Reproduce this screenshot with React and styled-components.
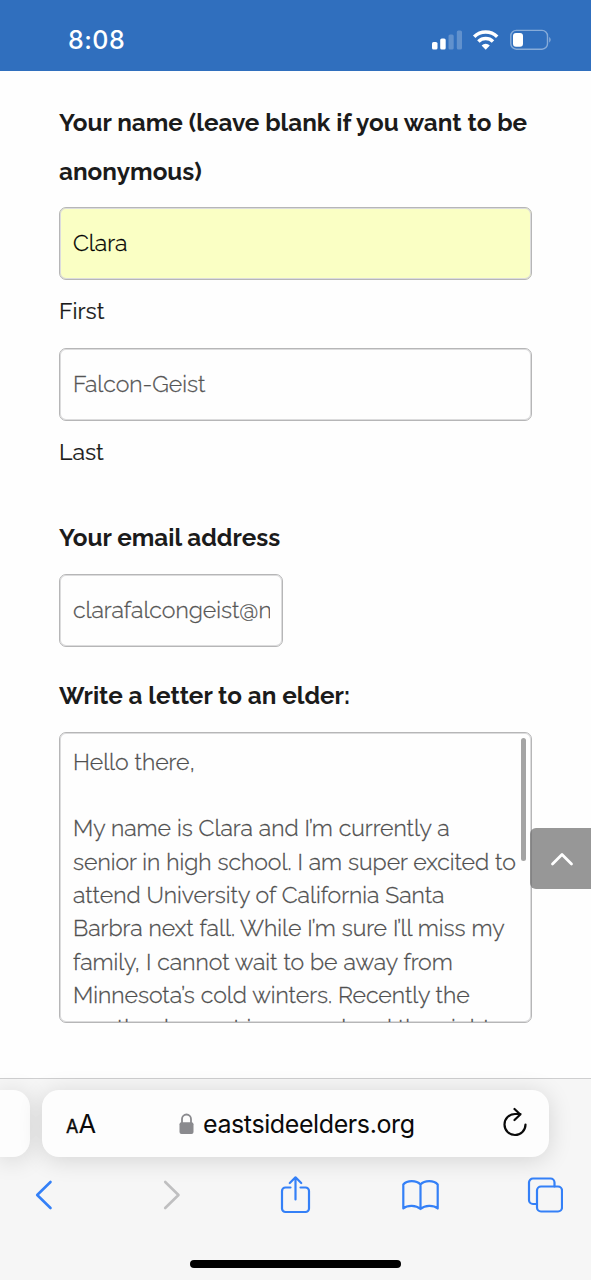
import React from "react";
import styled, { createGlobalStyle } from "styled-components";

const GlobalStyle = createGlobalStyle`
  * {
    box-sizing: border-box;
  }
  body {
    margin: 0;
    background: #fefefe;
  }
`;

const Screen = styled.div`
  position: relative;
  display: flex;
  flex-direction: column;
  width: 591px;
  height: 1280px;
  overflow: hidden;
  background: #fefefe;
  font-family: Raleway, Lato, sans-serif;
  color: #1b1b1b;
`;

const StatusBar = styled.header`
  display: flex;
  flex: none;
  align-items: center;
  justify-content: space-between;
  height: 71px;
  padding: 9px 39px 0 68px;
  background: #306fbe;
`;

const Clock = styled.div`
  font-family: Inter, sans-serif;
  font-size: 25px;
  font-weight: 500;
  letter-spacing: 0.5px;
  color: #fff;
`;

const StatusIcons = styled.svg`
  display: block;
  width: 120px;
  height: 24px;
  margin-top: 1px;
`;

const Form = styled.main`
  display: flex;
  flex: none;
  flex-direction: column;
  align-items: flex-start;
  height: 1007px;
  padding: 28px 59px 0;
  overflow: hidden;
`;

const Label = styled.label`
  margin-top: ${props => props.top || 0}px;
  font-size: 24.27px;
  font-weight: 700;
  line-height: 48.5px;
  white-space: nowrap;
`;

const Line = styled.span`
  display: block;
`;

const Box = styled.div`
  flex: none;
  border: 1px solid #b6b6b7;
  border-radius: 7px;
  box-shadow: inset 0 0 0 1px #dcdcdd;
  font-size: 23px;
  font-weight: 300;
  -webkit-text-stroke: 0.3px;
`;

const Field = styled(Box)`
  width: ${props => props.width || 473}px;
  height: 73px;
  margin-top: ${props => props.top}px;
  padding: 0 12px 0 13px;
  background: ${props => (props.filled ? "#faffc4" : "#fefefe")};
  color: ${props => (props.filled ? "#000" : "#555")};
  line-height: 70px;
  white-space: nowrap;
`;

const FieldText = styled.div`
  overflow: hidden;
`;

const SubLabel = styled.div`
  height: 48px;
  margin-top: 8px;
  font-size: 22.98px;
  line-height: 46px;
  -webkit-text-stroke: 0.2px;
`;

const Letter = styled(Box)`
  display: flex;
  justify-content: space-between;
  width: 473px;
  height: 291px;
  margin-top: 12px;
  padding: 5px 5px 0 13px;
  overflow: hidden;
  color: #4f4f4f;
  line-height: 33.36px;
  white-space: pre;
`;

const LetterText = styled.div`
  width: 443px;
  padding-top: 6.5px;
`;

const ScrollThumb = styled.div`
  flex: none;
  width: 5px;
  height: 123px;
  border-radius: 3px;
  background: #a4a4a4;
`;

const ToTop = styled.button`
  position: absolute;
  top: 828px;
  right: 0;
  display: flex;
  align-items: center;
  justify-content: center;
  width: 61px;
  height: 61px;
  padding: 0 0 0 2px;
  border: 0;
  border-radius: 6px 0 0 6px;
  background: rgba(112, 112, 112, 0.73);
`;

const BottomBar = styled.footer`
  display: flex;
  flex: 1;
  flex-direction: column;
  border-top: 1px solid #cfcfd0;
  background: #f6f6f6;
`;

const Tabs = styled.div`
  display: flex;
  gap: 12px;
  height: 79px;
  padding-top: 11px;
`;

const PreviousTab = styled.div`
  width: 30px;
  height: 67px;
  border-radius: 0 17px 17px 0;
  background: #fdfdfd;
  box-shadow: 0 3px 24px rgba(0, 0, 0, 0.14);
`;

const AddressBar = styled.div`
  display: flex;
  align-items: center;
  width: 507px;
  height: 67px;
  padding: 0 22px 0 24px;
  border-radius: 17px;
  background: #fdfdfd;
  box-shadow: 0 3px 24px rgba(0, 0, 0, 0.14);
  color: #0a0a0a;
  font-family: Inter, sans-serif;
`;

const TextSize = styled.div`
  width: 113px;
  padding-top: 3px;
  font-size: 25.5px;
  line-height: 30px;

  small {
    font-size: 18px;
    -webkit-text-stroke: 0.4px;
  }
`;

const Address = styled.div`
  flex: 1;
  padding: 1px 0 0 9px;
  font-size: 25px;
  letter-spacing: -0.4px;
`;

const Toolbar = styled.nav`
  display: flex;
  align-items: center;
  justify-content: space-between;
  height: 74px;
  padding: 0 21px 0 19px;
`;

const ToolButton = styled.div`
  display: flex;
  justify-content: center;
  width: 50px;
`;

const Icon = styled.svg`
  display: block;
  flex: none;
  fill: none;
  stroke: ${props => props.color || "#3480f7"};
  stroke-width: ${props => props.weight || 2.2};
  stroke-linecap: round;
  stroke-linejoin: round;
`;

const ReloadIcon = styled(Icon)`
  margin-bottom: 3px;
`;

const HomeIndicator = styled.div`
  align-self: center;
  width: 211px;
  height: 8px;
  margin-top: 28px;
  border-radius: 4px;
  background: #000;
`;

const letter = [
  "Hello there,",
  " ",
  "My name is Clara and I’m currently a",
  "senior in high school. I am super excited to",
  "attend University of California Santa",
  "Barbra next fall. While I’m sure I’ll miss my",
  "family, I cannot wait to be away from",
  "Minnesota’s cold winters. Recently the",
  "weather has not improved and the nights"
];

function Status() {
  return (
    <StatusBar>
      <Clock>8:08</Clock>
      <StatusIcons viewBox="0 0 120 24" fill="#fff">
        <rect x="0" y="13" width="5.5" height="7.5" rx="1.6" />
        <rect x="8.2" y="9.5" width="5.5" height="11" rx="1.6" />
        <rect x="16.5" y="5.5" width="5.2" height="15" rx="1.6" opacity="0.24" />
        <rect x="24.8" y="1.5" width="5.2" height="19" rx="1.6" opacity="0.24" />
        <g fill="none" stroke="#fff" strokeWidth="3.5">
          <path d="M42.2 7.8a16.4 16.4 0 0 1 23 0" />
          <path d="M46.4 12.6a10.4 10.4 0 0 1 14.6 0" />
        </g>
        <path d="M49.6 16.4a6 6 0 0 1 8.2 0l-4.1 4.3z" />
        <rect x="78.8" y="1.4" width="36.7" height="18.8" rx="5.5" fill="none" stroke="#fff" strokeWidth="1.4" opacity="0.42" />
        <rect x="81" y="4" width="10" height="13.8" rx="3" />
        <path d="M117.3 7.8q2.6 3 0 6z" opacity="0.5" />
      </StatusIcons>
    </StatusBar>
  );
}

function Browser() {
  return (
    <BottomBar>
      <Tabs>
        <PreviousTab />
        <AddressBar>
          <TextSize>
            <small>A</small>A
          </TextSize>
          <svg width="15" height="22" viewBox="0 0 15 22">
            <path d="M3 11V6a4.5 4.5 0 0 1 9 0V11" fill="none" stroke="#8a8a8e" strokeWidth="1.8" />
            <rect x="0.5" y="9.3" width="14" height="11.7" rx="2" fill="#8a8a8e" />
          </svg>
          <Address>eastsideelders.org</Address>
          <ReloadIcon width="24" height="30" viewBox="0 0 24 30" color="#0a0a0a">
            <path d="M22.5 17.5A10.5 10.5 0 1 1 12 7H17.5M11.5 2L17.3 7.5L11.5 13" />
          </ReloadIcon>
        </AddressBar>
      </Tabs>
      <Toolbar>
        <ToolButton>
          <Icon width="28" height="36" viewBox="0 0 28 36" weight="2.6">
            <path d="M20.5 5L7.2 18L20.5 31" />
          </Icon>
        </ToolButton>
        <ToolButton>
          <Icon width="28" height="36" viewBox="0 0 28 36" color="#bfbfc0" weight="2.6">
            <path d="M10.2 5L23.5 18L10.2 31" />
          </Icon>
        </ToolButton>
        <ToolButton>
          <Icon width="32" height="38" viewBox="-1.5 0.5 32 38">
            <path d="M10 12H5a3.5 3.5 0 0 0-3.5 3.5V33A3.5 3.5 0 0 0 5 36.5H25A3.5 3.5 0 0 0 28.500 33V15.5A3.5 3.5 0 0 0 25 12H20M15 24V2M9.3 7.5L15 1.8L20.7 7.5" />
          </Icon>
        </ToolButton>
        <ToolButton>
          <Icon width="38" height="32" viewBox="0 0 38 32">
            <path d="M19.5 5.5C15.5 1 6 1 2.3 5.5V29.5C6.5 26 15 26 19.5 30C24 26 32.5 26 36.7 29.5V5.5C33 1 23.5 1 19.5 5.5V30" />
          </Icon>
        </ToolButton>
        <ToolButton>
          <Icon width="36" height="36" viewBox="-0.5 0 36 36">
            <path d="M9.5 27H5.5A4 4 0 0 1 1.5 23V5.5A4 4 0 0 1 5.5 1.5H23A4 4 0 0 1 27 5.5V9.5" />
            <rect x="9.5" y="9.5" width="25" height="25" rx="4" />
          </Icon>
        </ToolButton>
      </Toolbar>
      <HomeIndicator />
    </BottomBar>
  );
}

export default function App() {
  return (
    <Screen>
      <GlobalStyle />
      <Status />
      <Form>
        <Label>
          <Line>Your name (leave blank if you want to be</Line>
          <Line>anonymous)</Line>
        </Label>
        <Field top={11} filled>
          <FieldText>Clara</FieldText>
        </Field>
        <SubLabel>First</SubLabel>
        <Field top={12}>
          <FieldText>Falcon-Geist</FieldText>
        </Field>
        <SubLabel>Last</SubLabel>
        <Label top={37}>
          <Line>Your email address</Line>
        </Label>
        <Field top={11} width={224}>
          <FieldText>clarafalcongeist@northfield</FieldText>
        </Field>
        <Label top={25}>
          <Line>Write a letter to an elder:</Line>
        </Label>
        <Letter>
          <LetterText>
            {letter.map(text => (
              <Line key={text}>{text}</Line>
            ))}
          </LetterText>
          <ScrollThumb />
        </Letter>
      </Form>
      <Browser />
      <ToTop>
        <Icon width="24" height="16" viewBox="0 0 24 16" color="#fff" weight="2.8">
          <path d="M2.5 13L12 3.5L21.5 13" />
        </Icon>
      </ToTop>
    </Screen>
  );
}
